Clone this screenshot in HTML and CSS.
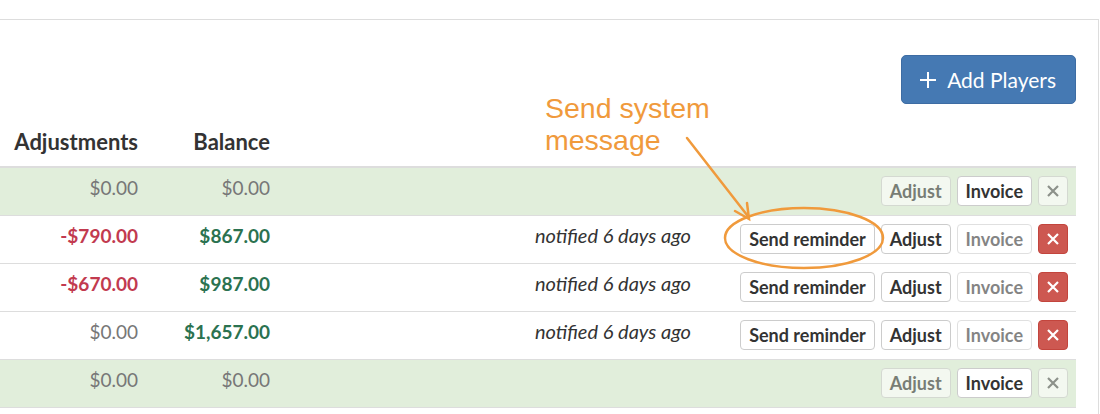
FILE: index.html
```html
<!DOCTYPE html>
<html lang="en">

<head>
    <meta charset="UTF-8" />
    <meta name="viewport" content="width=device-width, initial-scale=1.0" />
    <title>Players</title>
    <link rel="stylesheet" href="styles.css">
</head>

<body>
    <div class="panel">
        <div class="toolbar">
            <button class="btnAdd">
                <svg class="plusIcon" viewBox="0 0 16 16" width="16" height="16">
                    <path d="M8 0v16M0 8h16" stroke="#fff" stroke-width="2" fill="none" />
                </svg>
                Add Players
            </button>
        </div>

        <table class="roster">
            <colgroup>
                <col class="colAdj">
                <col class="colBal">
                <col class="colNote">
                <col class="colAct">
            </colgroup>
            <thead>
                <tr>
                    <th class="num">Adjustments</th>
                    <th class="num">Balance</th>
                    <th></th>
                    <th></th>
                </tr>
            </thead>
            <tbody>
                <tr class="paid">
                    <td class="num zero">$0.00</td>
                    <td class="num zero">$0.00</td>
                    <td class="note"></td>
                    <td>
                        <div class="actions">
                            <button class="btn off">Adjust</button>
                            <button class="btn">Invoice</button>
                            <button class="btn btnX off"><svg viewBox="0 0 12 12" width="12" height="12"><path d="M1 1l10 10M11 1L1 11" stroke="#555" stroke-width="2.2" fill="none" /></svg></button>
                        </div>
                    </td>
                </tr>
                <tr>
                    <td class="num neg">-$790.00</td>
                    <td class="num pos">$867.00</td>
                    <td class="note">notified 6 days ago</td>
                    <td>
                        <div class="actions">
                            <button class="btn">Send reminder</button>
                            <button class="btn">Adjust</button>
                            <button class="btn off">Invoice</button>
                            <button class="btn btnX torles"><svg viewBox="0 0 12 12" width="12" height="12"><path d="M1 1l10 10M11 1L1 11" stroke="#fff" stroke-width="2.2" fill="none" /></svg></button>
                        </div>
                    </td>
                </tr>
                <tr>
                    <td class="num neg">-$670.00</td>
                    <td class="num pos">$987.00</td>
                    <td class="note">notified 6 days ago</td>
                    <td>
                        <div class="actions">
                            <button class="btn">Send reminder</button>
                            <button class="btn">Adjust</button>
                            <button class="btn off">Invoice</button>
                            <button class="btn btnX torles"><svg viewBox="0 0 12 12" width="12" height="12"><path d="M1 1l10 10M11 1L1 11" stroke="#fff" stroke-width="2.2" fill="none" /></svg></button>
                        </div>
                    </td>
                </tr>
                <tr>
                    <td class="num zero">$0.00</td>
                    <td class="num pos">$1,657.00</td>
                    <td class="note">notified 6 days ago</td>
                    <td>
                        <div class="actions">
                            <button class="btn">Send reminder</button>
                            <button class="btn">Adjust</button>
                            <button class="btn off">Invoice</button>
                            <button class="btn btnX torles"><svg viewBox="0 0 12 12" width="12" height="12"><path d="M1 1l10 10M11 1L1 11" stroke="#fff" stroke-width="2.2" fill="none" /></svg></button>
                        </div>
                    </td>
                </tr>
                <tr class="paid utolso">
                    <td class="num zero">$0.00</td>
                    <td class="num zero">$0.00</td>
                    <td class="note"></td>
                    <td>
                        <div class="actions">
                            <button class="btn off">Adjust</button>
                            <button class="btn">Invoice</button>
                            <button class="btn btnX off"><svg viewBox="0 0 12 12" width="12" height="12"><path d="M1 1l10 10M11 1L1 11" stroke="#555" stroke-width="2.2" fill="none" /></svg></button>
                        </div>
                    </td>
                </tr>
            </tbody>
        </table>
    </div>

    <!-- annotation drawn over the screenshot -->
    <div class="callout">Send system<br>message</div>
    <svg class="calloutMarks" width="1100" height="414" viewBox="0 0 1100 414">
        <g stroke="#f09a3c" stroke-width="2.5" fill="none" stroke-linecap="round">
            <path d="M687 138L747 215" />
            <path d="M735 211L749 219L747 203" />
            <ellipse cx="804" cy="238" rx="79" ry="30" />
        </g>
    </svg>
</body>

</html>
```

FILE: styles.css
```css
body {
    font-family: Lato, "Open Sans", sans-serif;
    color: #333;
    margin: 0;
    background: #fff;
    overflow: hidden;
}

.panel {
    margin-top: 19px;
    width: 1076px;
    padding-right: 22px;
    border-top: 1px solid #ddd;
    border-right: 1px solid #ddd;
    height: 420px;
}

.toolbar {
    display: flex;
    justify-content: flex-end;
    padding-top: 35px;
    padding-bottom: 20px;
}

.btnAdd {
    display: flex;
    align-items: center;
    gap: 11px;
    height: 49px;
    padding: 0 19px 0 18px;
    background: #4579b3;
    border: 1px solid #3d6ca3;
    border-radius: 5px;
    color: #fff;
    font-family: Lato, sans-serif;
    font-size: 21px;
}

.roster {
    width: 1076px;
    table-layout: fixed;
    border-collapse: collapse;
}

.colAdj {
    width: 146px;
}

.colBal {
    width: 132px;
}

.colNote {
    width: 421px;
}

.roster th {
    font-size: 22px;
    font-weight: bold;
    padding: 5px 8px 11px;
    line-height: 26px;
    border-bottom: 2px solid #ddd;
}

.roster td {
    padding: 8px;
    border-top: 1px solid #ddd;
    font-size: 19px;
    vertical-align: middle;
}

.roster td.num {
    padding: 4px 8px 12px;
}

.utolso td {
    border-bottom: 1px solid #ddd;
}

.num {
    text-align: right;
}

.paid td {
    background: #e1eedb;
}

.zero {
    color: #777;
}

.neg {
    color: #c23a4f;
    font-weight: bold;
}

.pos {
    color: #2b7250;
    font-weight: bold;
}

.roster td.note {
    padding: 3px 8px 13px;
    text-align: right;
    font-style: italic;
    font-size: 20px;
}

.actions {
    display: flex;
    justify-content: flex-end;
    align-items: flex-start;
    gap: 6px;
    height: 31px;
}

.btn {
    height: 30px;
    padding: 0 8px;
    background: #fff;
    border: 1px solid #ccc;
    border-radius: 4px;
    color: #333;
    font-family: Lato, sans-serif;
    font-size: 18px;
    font-weight: bold;
}

.btn.off {
    opacity: 0.6;
    cursor: not-allowed;
}

.btnX {
    width: 30px;
    padding: 0;
    display: flex;
    align-items: center;
    justify-content: center;
}

.torles {
    background: #cd5851;
    border-color: #c3453d;
}

.callout {
    position: absolute;
    left: 545px;
    top: 92px;
    font-family: "Liberation Sans", Arial, sans-serif;
    font-size: 28.5px;
    line-height: 32px;
    color: #f09a3c;
}

.calloutMarks {
    position: absolute;
    left: 0;
    top: 0;
    pointer-events: none;
}
```
